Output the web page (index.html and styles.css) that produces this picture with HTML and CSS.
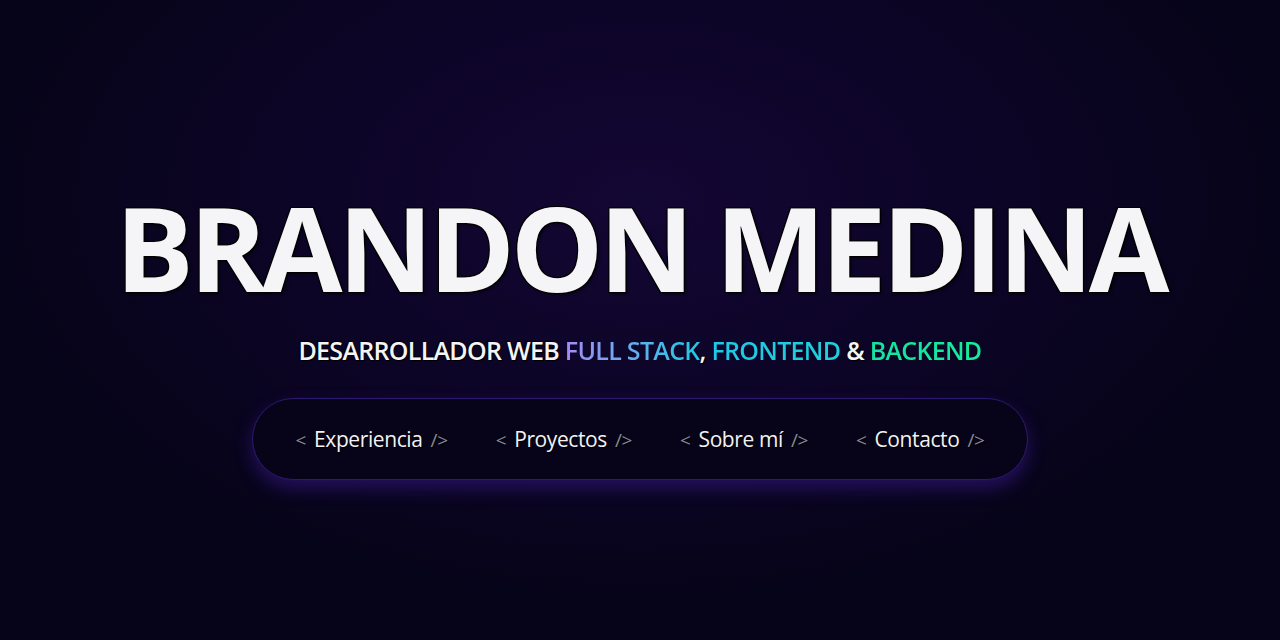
FILE: index.html
```html
<!DOCTYPE html>
<html lang="es">
<head>
<meta charset="utf-8">
<title>Brandon Medina</title>
<link rel="stylesheet" href="styles.css">
</head>
<body>
<main class="hero">
  <h1 class="title">BRANDON MEDINA</h1>
  <p class="subtitle">DESARROLLADOR WEB <span class="g-full">FULL STACK</span>, <span class="g-front">FRONTEND</span> &amp; <span class="g-back">BACKEND</span></p>
  <nav class="nav">
    <a class="nav-item" href="#"><span class="br">&lt;</span> Experiencia <span class="br">/&gt;</span></a>
    <a class="nav-item" href="#"><span class="br">&lt;</span> Proyectos <span class="br">/&gt;</span></a>
    <a class="nav-item" href="#"><span class="br">&lt;</span> Sobre mí <span class="br">/&gt;</span></a>
    <a class="nav-item" href="#"><span class="br">&lt;</span> Contacto <span class="br">/&gt;</span></a>
  </nav>
</main>
</body>
</html>
```
FILE: styles.css
```css
html, body {
  margin: 0;
  height: 100%;
}
body {
  background: radial-gradient(ellipse 680px 420px at 640px 200px, #140734 0%, #0d0528 45%, #060418 100%);
  background-color: #060418;
  font-family: "Open Sans", "Noto Sans", sans-serif;
  color: #f4f4f6;
  overflow: hidden;
}
.hero {
  height: 640px;
  display: flex;
  flex-direction: column;
  align-items: center;
  padding-top: 179px;
  box-sizing: border-box;
}
.title {
  margin: 0;
  font-size: 117px;
  font-weight: 700;
  line-height: 136px;
  letter-spacing: -4.6px;
  color: #f5f5f7;
  text-shadow: 1px 1px 0 #000, -1px -1px 0 #000, 1px -1px 0 #000, -1px 1px 0 #000, 2px 2px 3px rgba(0,0,0,0.6);
}
.subtitle {
  margin: 18px 0 0;
  font-size: 25px;
  font-weight: 600;
  line-height: 34px;
  letter-spacing: -0.7px;
  color: #f4f4f6;
  text-shadow: 1px 1px 1px #000, -1px -1px 1px #000;
}
.g-full, .g-front, .g-back {
  background-clip: text;
  -webkit-background-clip: text;
  color: transparent;
  text-shadow: none;
}
.g-full { background-image: linear-gradient(90deg, #a48cf4 0%, #5fb0ec 55%, #22c8e0 100%); }
.g-front { background-image: linear-gradient(90deg, #1fc8e8 0%, #1fd0d8 100%); }
.g-back { background-image: linear-gradient(90deg, #16e2a0 0%, #12ee9c 100%); }
.nav {
  margin-top: 31px;
  display: flex;
  align-items: center;
  gap: 42px;
  height: 80px;
  padding: 0 40px;
  border: 1px solid #2c1a6e;
  border-radius: 41px;
  background: #07041a;
  box-shadow: 0 8px 18px rgba(80, 35, 190, 0.4);
}
.nav-item {
  color: #f2f2f4;
  text-decoration: none;
  font-size: 21px;
  letter-spacing: -0.4px;
  text-shadow: 1px 1px 1px #000;
  white-space: nowrap;
}
.br {
  color: #8a8a94;
  font-size: 19px;
  margin: 0 3px;
}
```
